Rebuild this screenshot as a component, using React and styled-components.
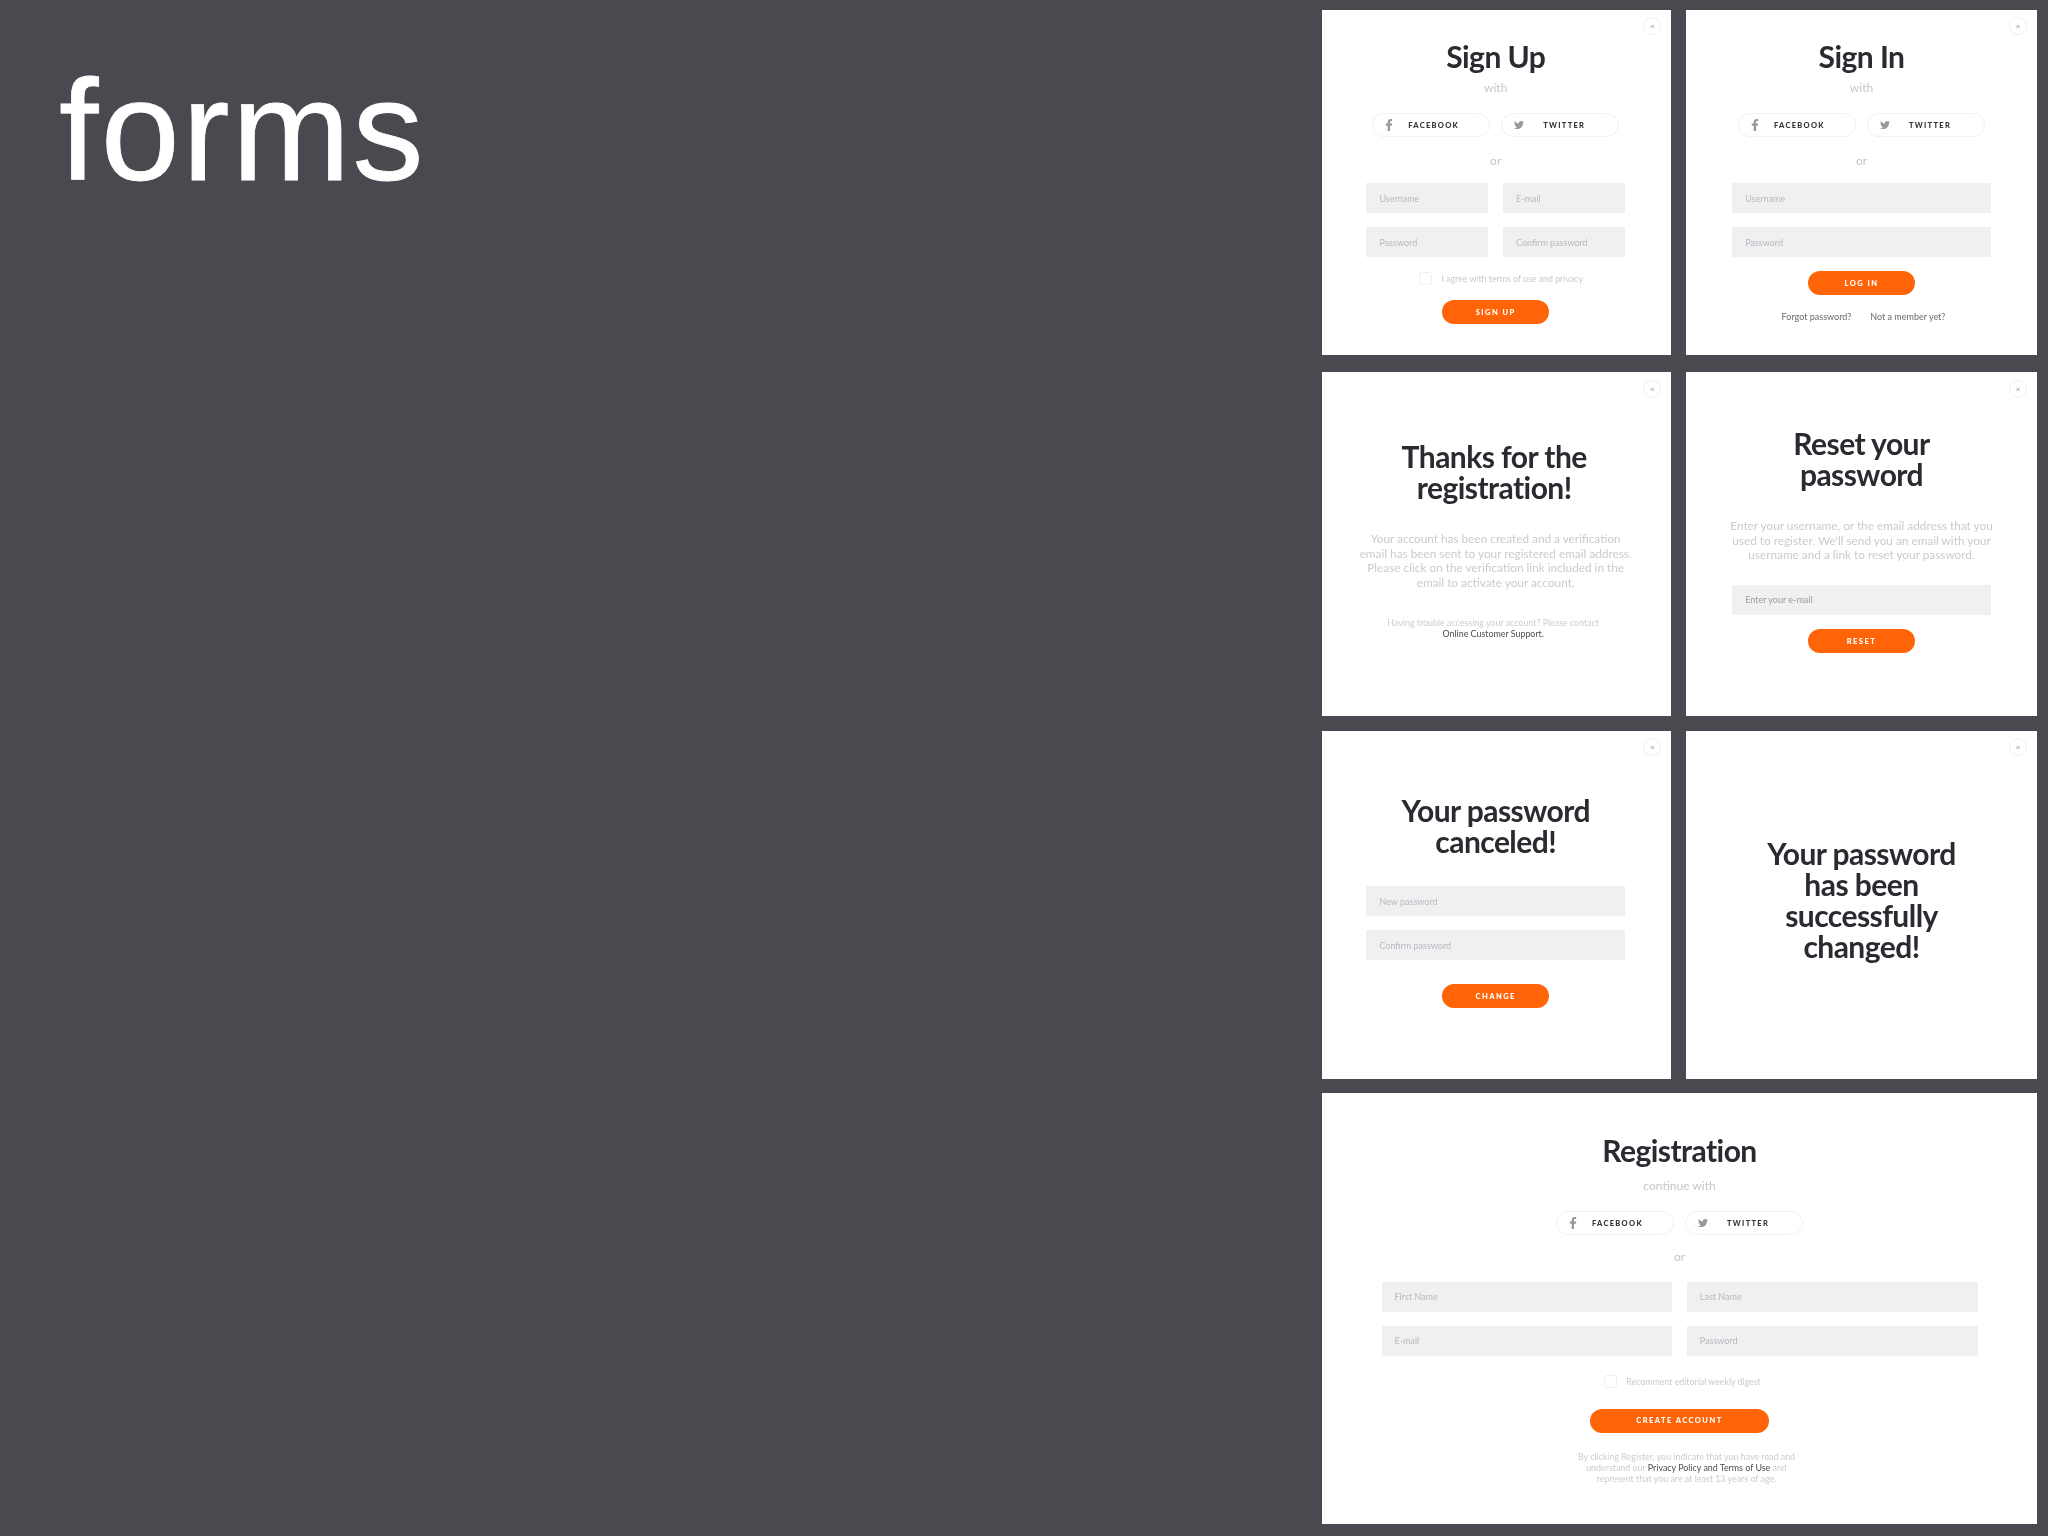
import React from 'react';
import styled, { createGlobalStyle } from 'styled-components';
import { FaFacebookF, FaTwitter } from 'react-icons/fa';

const GlobalStyle = createGlobalStyle`
  html, body {
    margin: 0;
    padding: 0;
    background: #4a4950;
  }
  * { box-sizing: border-box; }
`;

const Page = styled.div`
  width: 2048px;
  height: 1536px;
  overflow: hidden;
  display: flex;
  justify-content: space-between;
  background: #4a4950;
`;

const Heading = styled.h1`
  margin: 0;
  padding: 59px 0 0 59px;
  font: 400 142px/144px "Liberation Sans", Arial, sans-serif;
  letter-spacing: 2.4px;
  -webkit-text-stroke: 0.8px #fff;
  color: #fff;
`;

const Sheet = styled.div`
  width: 715px;
  margin-right: 11px;
  padding-top: 9.5px;
  display: flex;
  flex-direction: column;
`;

const Row = styled.div`
  display: grid;
  grid-template-columns: ${(p) => (p.$wide ? '1fr' : '349.4px 351px')};
  column-gap: 14.6px;
  height: ${(p) => p.$height}px;
  margin-top: ${(p) => p.$top || 0}px;
`;

const Card = styled.section`
  position: relative;
  display: flex;
  flex-direction: column;
  align-items: center;
  padding-top: ${(p) => p.$pad}px;
  padding-right: ${(p) => (p.$first ? 2 : 0)}px;
  background: #fff;
  font-family: Lato, "Open Sans", sans-serif;
  text-align: center;
  filter: blur(0.55px);
`;

const Close = styled.span`
  position: absolute;
  top: 7.5px;
  right: 10px;
  width: 18px;
  height: 18px;
  display: flex;
  align-items: center;
  justify-content: center;
  border: 1px solid #f1f1f4;
  border-radius: 50%;
  font-size: 8px;
  line-height: 1;
  color: #98989c;
`;

const Title = styled.h2`
  margin: 0 0 0 ${(p) => p.$nudge || 0}px;
  font-size: 30px;
  line-height: 31px;
  font-weight: 700;
  letter-spacing: -0.55px;
  color: #2a2a30;
`;

const Sub = styled.div`
  margin-top: ${(p) => p.$top || 8.5}px;
  font-size: 12px;
  line-height: 14px;
  color: #c6c6ca;
`;

const Socials = styled.div`
  display: flex;
  gap: 11px;
  margin-top: ${(p) => p.$top || 18.5}px;
`;

const SocialButton = styled.div`
  width: 118px;
  height: 24px;
  display: flex;
  align-items: center;
  border: 1px solid #f1f1f5;
  border-radius: 12px;
`;

const SocialIcon = styled.span`
  width: ${(p) => p.$width}px;
  padding-left: ${(p) => p.$left}px;
  display: flex;
  align-items: center;
  font-size: ${(p) => p.$size}px;
  color: #98989d;
`;

const SocialLabel = styled.span`
  font-size: 7.5px;
  font-weight: 900;
  letter-spacing: 1.3px;
  color: #33333a;
`;

const Or = styled.div`
  margin-top: ${(p) => p.$top || 16.8}px;
  font-size: 12px;
  line-height: 14px;
  color: #c6c6ca;
`;

const Fields = styled.div`
  display: grid;
  grid-template-columns: ${(p) => (p.$cols === 2 ? '1fr 1fr' : '1fr')};
  column-gap: 14.6px;
  row-gap: 14px;
  width: ${(p) => p.$width || 258.6}px;
  margin-top: ${(p) => p.$top}px;
`;

const Field = styled.div`
  height: 30px;
  padding-left: 13px;
  display: flex;
  align-items: center;
  background: #f0f0f2;
  font-size: 9px;
  color: ${(p) => (p.$dark ? '#9b9b9f' : '#b9b9bd')};
`;

const Check = styled.label`
  margin-top: ${(p) => p.$top}px;
  margin-left: ${(p) => p.$shift || 0}px;
  display: flex;
  align-items: center;
  gap: 9px;
  font-size: 8.8px;
  line-height: 13px;
  color: #cacace;
`;

const Box = styled.span`
  width: 13px;
  height: 13px;
  border: 1px solid #efeff2;
  border-radius: 3px;
`;

const Cta = styled.button`
  width: ${(p) => p.$width || 107}px;
  height: 24px;
  margin-top: ${(p) => p.$top}px;
  padding: 0;
  border: 0;
  border-radius: 12px;
  background: #ff6408;
  font-family: inherit;
  font-size: 7.5px;
  font-weight: 900;
  letter-spacing: 1.45px;
  color: #fff;
`;

const Links = styled.div`
  display: flex;
  gap: 19px;
  margin-top: 16px;
  margin-left: 4px;
  font-size: 9px;
  line-height: 12px;
  color: #6a6a70;
`;

const Copy = styled.p`
  margin: ${(p) => p.$top}px 0 0;
  font-size: 11.8px;
  line-height: 14.7px;
  color: #cbcbcf;
`;

const Fine = styled.p`
  margin: ${(p) => p.$top}px 0 0 ${(p) => p.$shift || 0}px;
  font-size: 8.9px;
  line-height: 11px;
  color: #cdcdd1;
`;

const Strong = styled.span`
  color: #4c4c52;
`;

const SocialPair = ({ top }) => (
  <Socials $top={top}>
    <SocialButton>
      <SocialIcon $width={35} $left={10} $size={12}><FaFacebookF /></SocialIcon>
      <SocialLabel>FACEBOOK</SocialLabel>
    </SocialButton>
    <SocialButton>
      <SocialIcon $width={41} $left={12} $size={10}><FaTwitter /></SocialIcon>
      <SocialLabel>TWITTER</SocialLabel>
    </SocialButton>
  </Socials>
);

const CloseButton = () => <Close>×</Close>;

export default function App() {
  return (
    <Page>
      <GlobalStyle />
      <Heading>forms</Heading>
      <Sheet>
        <Row $height={345}>
          <Card $pad={31.7} $first>
            <CloseButton />
            <Title>Sign Up</Title>
            <Sub>with</Sub>
            <SocialPair />
            <Or>or</Or>
            <Fields $cols={2} $top={15.5}>
              <Field>Username</Field>
              <Field>E-mail</Field>
              <Field>Password</Field>
              <Field>Confirm password</Field>
            </Fields>
            <Check $top={15} $shift={11}><Box />I agree with terms of use and privacy</Check>
            <Cta $top={15}>SIGN UP</Cta>
          </Card>
          <Card $pad={31.7}>
            <CloseButton />
            <Title>Sign In</Title>
            <Sub>with</Sub>
            <SocialPair />
            <Or>or</Or>
            <Fields $top={15.5}>
              <Field>Username</Field>
              <Field>Password</Field>
            </Fields>
            <Cta $top={14}>LOG IN</Cta>
            <Links>
              <span>Forgot password?</span>
              <span>Not a member yet?</span>
            </Links>
          </Card>
        </Row>
        <Row $height={344} $top={17.5}>
          <Card $pad={69} $first>
            <CloseButton />
            <Title $nudge={-3}>Thanks for the<br />registration!</Title>
            <Copy $top={29}>
              Your account has been created and a verification<br />
              email has been sent to your registered email address.<br />
              Please click on the verification link included in the<br />
              email to activate your account.
            </Copy>
            <Fine $top={26} $shift={-5}>
              Having trouble accessing your account? Please contact<br />
              <Strong>Online Customer Support.</Strong>
            </Fine>
          </Card>
          <Card $pad={56}>
            <CloseButton />
            <Title>Reset your<br />password</Title>
            <Copy $top={29}>
              Enter your username, or the email address that you<br />
              used to register. We'll send you an email with your<br />
              username and a link to reset your password.
            </Copy>
            <Fields $top={21.5}>
              <Field $dark>Enter your e-mail</Field>
            </Fields>
            <Cta $top={14.5}>RESET</Cta>
          </Card>
        </Row>
        <Row $height={348.3} $top={14.7}>
          <Card $pad={64.5} $first>
            <CloseButton />
            <Title>Your password<br />canceled!</Title>
            <Fields $top={29}>
              <Field>New password</Field>
              <Field>Confirm password</Field>
            </Fields>
            <Cta $top={24}>CHANGE</Cta>
          </Card>
          <Card $pad={107}>
            <CloseButton />
            <Title>Your password<br />has been<br />successfully<br />changed!</Title>
          </Card>
        </Row>
        <Row $height={431} $top={14} $wide>
          <Card $pad={42}>
            <Title>Registration</Title>
            <Sub $top={13}>continue with</Sub>
            <SocialPair top={18.5} />
            <Or $top={15}>or</Or>
            <Fields $cols={2} $width={596} $top={17.5}>
              <Field>First Name</Field>
              <Field>Last Name</Field>
              <Field>E-mail</Field>
              <Field>Password</Field>
            </Fields>
            <Check $top={19} $shift={6}><Box />Recomment editorial weekly digest</Check>
            <Cta $width={178.5} $top={21}>CREATE ACCOUNT</Cta>
            <Fine $top={18} $shift={14}>
              By clicking Register, you indicate that you have read and<br />
              understand our <Strong>Privacy Policy and Terms of Use</Strong> and<br />
              represent that you are at least 13 years of age.
            </Fine>
          </Card>
        </Row>
      </Sheet>
    </Page>
  );
}
